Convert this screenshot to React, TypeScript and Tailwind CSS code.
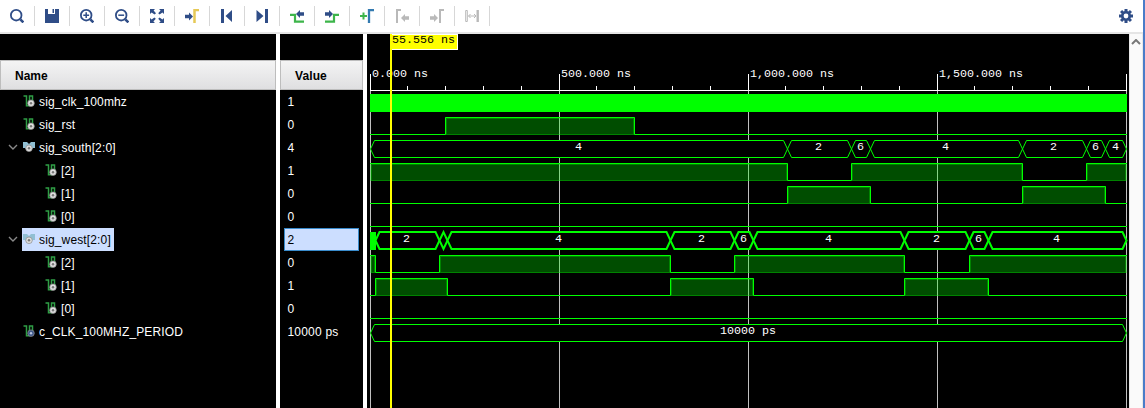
import React from "react";

const NAVY = "#2f4d87";
const GREEN = "#3db54a";
const GRAY = "#b9b9b9";

type Kind = "signal" | "bus" | "const";
type Row = { name: string; value: string; kind: Kind; child?: boolean; selected?: boolean };

const rows: Row[] = [
  { name: "sig_clk_100mhz", value: "1", kind: "signal" },
  { name: "sig_rst", value: "0", kind: "signal" },
  { name: "sig_south[2:0]", value: "4", kind: "bus" },
  { name: "[2]", value: "1", kind: "signal", child: true },
  { name: "[1]", value: "0", kind: "signal", child: true },
  { name: "[0]", value: "0", kind: "signal", child: true },
  { name: "sig_west[2:0]", value: "2", kind: "bus", selected: true },
  { name: "[2]", value: "0", kind: "signal", child: true },
  { name: "[1]", value: "1", kind: "signal", child: true },
  { name: "[0]", value: "0", kind: "signal", child: true },
  { name: "c_CLK_100MHZ_PERIOD", value: "10000 ps", kind: "const" },
];

function Lens({ children }: { children?: React.ReactNode }) {
  return (
    <g fill="none" stroke={NAVY} strokeWidth="1.8">
      <circle cx="6.2" cy="6.2" r="5.3" />
      <path d="M10.3 10.3L13.4 13.4" strokeWidth="2.6" />
      {children}
    </g>
  );
}

function Arrow({ x, y, color, flip }: { x: number; y: number; color: string; flip?: boolean }) {
  return (
    <path
      d={flip ? "M0 4L4 0V2.3H8V5.7H4V8Z" : "M8 4L4 0V2.3H0V5.7H4V8Z"}
      transform={`translate(${x} ${y})`}
      fill={color}
    />
  );
}

const tools: React.ReactNode[] = [
  <Lens />,
  <path d="M0 0H3V5H10V0H14V14H0ZM7.5 0H9V4H7.5Z" fill={NAVY} />,
  <Lens><path d="M3.3 6.2H9.1M6.2 3.3V9.1" strokeWidth="1.5" /></Lens>,
  <Lens><path d="M3.3 6.2H9.1" strokeWidth="1.5" /></Lens>,
  <path
    fill={NAVY}
    d="M0 0H5L3.6 1.4L6 4.2L4.6 5.6L1.6 3.4L0 5ZM14 0V5L12.4 3.4L9.6 5.6L8.2 4.2L10.6 1.6L9 0ZM0 14V9L1.6 10.6L4.4 8.4L5.8 9.8L3.4 12.4L5 14ZM14 14H9L10.6 12.4L8.2 9.8L9.6 8.4L12.4 10.6L14 9Z"
  />,
  <g><Arrow x={0} y={3.5} color={NAVY} /><path d="M9.5 14V1H14" fill="none" stroke="#e6c956" strokeWidth="2.5" /></g>,
  <path d="M1 0H4V14H1ZM12 1V13L5.5 7Z" fill={NAVY} />,
  <path d="M10 0H13V14H10ZM1.5 1V13L8.5 7Z" fill={NAVY} />,
  <g><path d="M0 5.8H5V12.6H14" fill="none" stroke={GREEN} strokeWidth="2.2" /><Arrow x={6} y={1} color={NAVY} flip /></g>,
  <g><path d="M0 12.6H9V5.8H14" fill="none" stroke={GREEN} strokeWidth="2.2" /><Arrow x={0} y={1} color={NAVY} /></g>,
  <g fill="none"><path d="M0 7H7M3.5 3.5V10.5" stroke={GREEN} strokeWidth="2" /><path d="M9 14V1H14" stroke="#337ab0" strokeWidth="2.3" /></g>,
  <g><path d="M2 14V1H6" fill="none" stroke={GRAY} strokeWidth="2" /><Arrow x={6} y={5} color={GRAY} flip /></g>,
  <g><Arrow x={0} y={5} color={GRAY} /><path d="M10 14V1H14" fill="none" stroke={GRAY} strokeWidth="2" /></g>,
  <g fill="none" stroke={GRAY}><path d="M.7 1.5H2.3V12.5H.7Z" /><path d="M12.7 1V13" strokeWidth="2.4" /><path d="M3.5 7H11M5.5 5L3.5 7L5.5 9M9 5L11 7L9 9" /></g>,
];

function Toolbar() {
  return (
    <div className="flex h-[34px] w-full items-start border-b-2 border-[#e5e5e5] bg-white">
      {tools.map((icon, i) => (
        <div key={i} className="flex h-8 w-[35px] shrink-0 items-center justify-end">
          <svg width="14" height="14" viewBox="0 0 14 14" className="mr-[10px] shrink-0">{icon}</svg>
          <div className="h-5 w-px shrink-0 bg-[#d7d7d7]" />
        </div>
      ))}
      <svg width="14" height="14" viewBox="-7 -7 14 14" className="mt-[9px] mr-[10px] ml-auto shrink-0">
        <g fill={NAVY}>
          {[0, 45, 90, 135].map((a) => (
            <rect key={a} x="-1.5" y="-7" width="3" height="14" transform={`rotate(${a})`} />
          ))}
          <circle r="5" />
        </g>
        <circle r="2.4" fill="white" />
      </svg>
    </div>
  );
}

function RowIcon({ kind }: { kind: Kind }) {
  const fill = kind === "const" ? "#405a8c" : "#dedede";
  return (
    <svg width="12" height="12" viewBox="0 0 12 12" className="shrink-0">
      {kind === "bus" ? (
        <path d="M0 1H4L6 3L8 1H12V7H10L8 9H4L2 7H0Z" fill="#91bfd3" />
      ) : (
        <path d="M.5 1H3.5V10.7H6.5V1H9.5V6" fill="none" stroke="#2f9e45" strokeWidth="1.5" />
      )}
      <circle cx={kind === "bus" ? 6 : 8} cy={kind === "bus" ? 7.3 : 8.2} r="3.3" fill={fill} stroke="#8d8d8d" strokeWidth=".7" />
      <circle cx={kind === "bus" ? 6 : 8} cy={kind === "bus" ? 7.3 : 8.2} r="1.2" fill={kind === "const" ? "#b6c4e0" : "#777"} />
    </svg>
  );
}

const header =
  "flex h-[30px] shrink-0 items-center border border-[#bdbdbd] bg-linear-to-b from-[#f4f4f4] to-[#dfdfe1] pt-px text-[12px] font-bold text-black";

function NamePanel() {
  return (
    <div className="flex w-[276px] shrink-0 flex-col pt-[26px]">
      <div className={`${header} pl-[14px]`}>Name</div>
      {rows.map((r, i) => (
        <div key={i} className="flex h-[23px] items-center">
          <div className={r.child ? "w-[44px] shrink-0" : "flex w-[22px] shrink-0 justify-end pr-[4px] pb-px"}>
            {r.kind === "bus" && (
              <svg width="10" height="6" viewBox="0 0 10 6">
                <path d="M1 1L5 5L9 1" fill="none" stroke="#898989" strokeWidth="1.4" />
              </svg>
            )}
          </div>
          <div className={`flex h-[23px] items-center gap-[4px] pr-[3px] pb-px pl-px tracking-[0.14px] ${r.selected ? "bg-[#ccdeff] text-black" : "text-white"}`}>
            <RowIcon kind={r.kind} />
            <span className="pt-[2px]">{r.name}</span>
          </div>
        </div>
      ))}
    </div>
  );
}

function ValuePanel() {
  return (
    <div className="flex w-[83px] shrink-0 flex-col pt-[26px]">
      <div className={`${header} pl-[14px] tracking-[0.1px]`}>Value</div>
      {rows.map((r, i) => (
        <div
          key={i}
          className={`mx-[4px] flex h-[23px] items-center border pt-px pl-[2.5px] tracking-[0.2px] ${r.selected ? "border-[#398bcb] bg-[#ccdeff] text-black" : "border-transparent text-white"}`}
        >
          {r.value}
        </div>
      ))}
    </div>
  );
}

const LEFT = 370;
const RIGHT = 1126;

function Digital({ top, pulses }: { top: number; pulses: [number, number][] }) {
  const low = top + 17;
  let d = `M${LEFT} ${low + 0.5}`;
  pulses.forEach(([a, b]) => {
    d += a === LEFT ? `M${a} ${top + 0.5}` : `H${a + 0.5}V${top + 0.5}`;
    d += b === RIGHT ? `H${b + 1}` : `H${b + 0.5}V${low + 0.5}`;
  });
  if (!pulses.length || pulses[pulses.length - 1][1] !== RIGHT) d += `H${RIGHT + 1}`;
  return (
    <g fill="none">
      {pulses.map(([a, b]) => (
        <g key={a}>
          <rect x={a} y={top} width={b - a + 1} height="18" fill="#0f0" fillOpacity=".3" />
          <rect x={a + 1.5} y={top + 1.5} width={b - a - 2} height="16" stroke="#0f0" strokeOpacity=".3" />
        </g>
      ))}
      <path d={d} stroke="#0f0" />
    </g>
  );
}

type Seg = [number, number, string?, number?];

function Bus({ top, segs, thick }: { top: number; segs: Seg[]; thick?: boolean }) {
  return (
    <g>
      {segs.map(([a, b, label, lx]) => {
        const s = Math.min(4, (b - a) / 2);
        const t = thick ? top : top + 0.5;
        const h = thick ? top + 17 : top + 17.5;
        const m = (t + h) / 2;
        return (
          <g key={a}>
            <path
              d={`M${a + 0.5} ${m}L${a + s + 0.5} ${t}H${b - s + 0.5}L${b + 0.5} ${m}L${b - s + 0.5} ${h}H${a + s + 0.5}Z`}
              fill="black"
              stroke="#0f0"
              strokeWidth={thick ? 2 : 1}
            />
            {label && <Mono x={lx!} y={top + 10} text={label} />}
          </g>
        );
      })}
    </g>
  );
}

function Mono({ x, y, text, color = "white" }: { x: number; y: number; text: string; color?: string }) {
  return (
    <text x={x} y={y} fill={color} fontSize="11.67" fontFamily="'Liberation Mono', monospace" className="whitespace-pre">
      {text}
    </text>
  );
}

const south: Seg[] = [
  [370, 787, "4", 575], [787, 851, "2", 815], [851, 870, "6", 857], [870, 1022, "4", 942],
  [1022, 1086, "2", 1050], [1086, 1105, "6", 1092], [1105, 1126, "4", 1112],
];
const west: Seg[] = [
  [375, 439, "2", 403], [439, 447], [447, 670, "4", 555], [670, 734, "2", 698], [734, 753, "6", 740],
  [753, 904, "4", 825], [904, 969, "2", 933], [969, 988, "6", 975], [988, 1126, "4", 1053],
];
const majors = [370, 559, 748, 937, 1126];
const labels = ["0.000 ns", "500.000 ns", "1,000.000 ns", "1,500.000 ns"];

function Waves() {
  return (
    <svg width="762" height="374" viewBox="367 34 762 374" className="block shrink-0 bg-black">
      {majors.map((x) => <rect key={x} x={x} y="91" width="1" height="317" fill="#c0c0c0" />)}
      <g fill="white">
        <rect x="370" y="90" width="757" height="1" />
        {Array.from({ length: 21 }, (_, i) => (
          <rect key={i} x={Math.floor(370 + i * 37.8)} y={i % 5 ? 86 : 74} width="1" height={i % 5 ? 4 : 16} />
        ))}
      </g>
      {labels.map((t, i) => <Mono key={t} x={majors[i] + 2} y={77} text={t} />)}

      <rect x="370" y="94" width="757" height="18" fill="#0f0" />
      <Digital top={117} pulses={[[445, 634]]} />
      <Bus top={140} segs={south} />
      <Digital top={163} pulses={[[370, 787], [851, 1022], [1086, 1126]]} />
      <Digital top={186} pulses={[[787, 870], [1022, 1105]]} />
      <Digital top={209} pulses={[]} />
      <Bus top={232} segs={west} thick />
      <rect x="370" y="232" width="6" height="18" fill="#0f0" />
      <Digital top={255} pulses={[[370, 375], [439, 670], [734, 904], [969, 1126]]} />
      <Digital top={278} pulses={[[375, 447], [670, 753], [904, 988]]} />
      <Digital top={301} pulses={[]} />
      <Bus top={324} segs={[[370, 1126, "10000 ps", 720]]} />

      <rect x="390" y="34" width="68" height="16" fill="white" />
      <rect x="391" y="35" width="66" height="14" fill="#ff0" />
      <rect x="390" y="34" width="2" height="374" fill="#ff0" />
      <Mono x={392} y={43} text="55.556 ns" color="black" />
    </svg>
  );
}

export default function App() {
  return (
    <div className="flex h-[408px] w-[1145px] overflow-hidden bg-white font-['Liberation_Sans',sans-serif] text-[12px] leading-none">
      <div className="flex w-[1143px] shrink-0 flex-col">
        <Toolbar />
        <div className="flex h-[374px]">
          <div className="flex bg-black">
            <NamePanel />
            <div className="w-[4px] shrink-0 bg-white" />
            <ValuePanel />
            <div className="w-[4px] shrink-0 bg-white" />
          </div>
          <Waves />
          <div className="flex w-[14px] shrink-0 justify-center border-x border-[#e8e8e8] bg-[#fafafa] pt-[5px]">
            <svg width="10" height="6" viewBox="0 0 10 6">
              <path d="M1 5L5 1L9 5" fill="none" stroke="#777" strokeWidth="2" />
            </svg>
          </div>
        </div>
      </div>
      <div className="w-[2px] shrink-0 bg-[#4a7cc8]" />
    </div>
  );
}
